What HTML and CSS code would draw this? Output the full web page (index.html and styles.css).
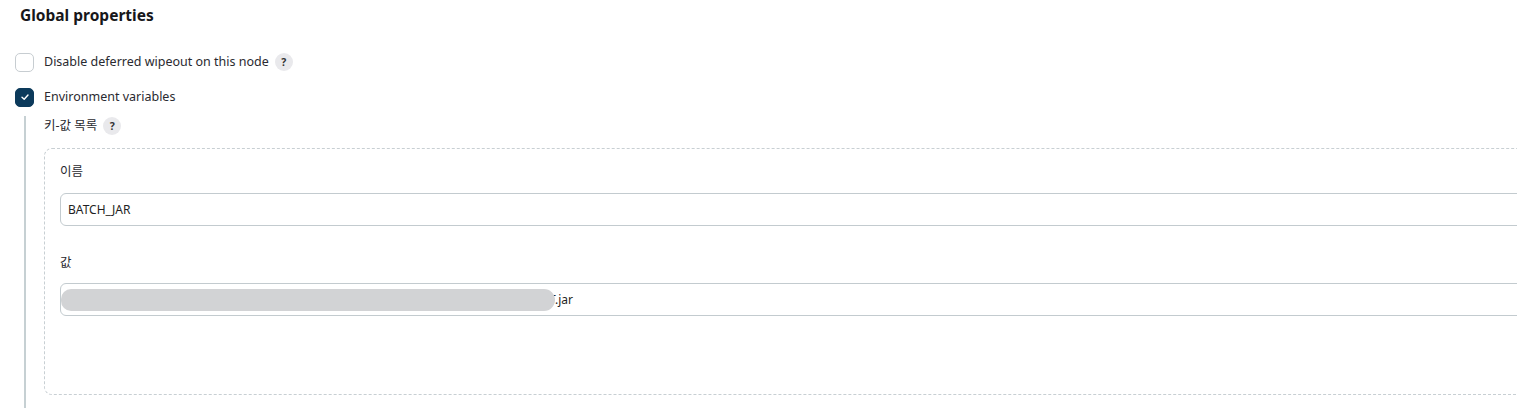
FILE: index.html
```html
<!DOCTYPE html>
<html>
<head>
<meta charset="utf-8">
<link rel="stylesheet" href="styles.css">
</head>
<body>
<div class="page">
  <h2 class="title">Global properties</h2>
  <div class="option">
    <span class="box"></span>
    <span class="label">Disable deferred wipeout on this node</span>
    <span class="help">?</span>
  </div>
  <div class="option checked-row">
    <span class="box checked">
      <svg width="10" height="10" viewBox="0 0 10 10"><path d="M2 5.2 L4.2 7.3 L8 3" fill="none" stroke="#fff" stroke-width="1.4" stroke-linecap="round" stroke-linejoin="round"/></svg>
    </span>
    <span class="label">Environment variables</span>
  </div>
  <div class="nested">
    <div class="kv-head">
      <span class="label">키-값 목록</span>
      <span class="help">?</span>
    </div>
    <div class="repeat">
      <div class="field-label">이름</div>
      <div class="input first">BATCH_JAR</div>
      <div class="field-label value-label">값</div>
      <div class="input redacted">
        <span class="blob"></span>
        <span class="tail">T.jar</span>
      </div>
    </div>
  </div>
</div>
</body>
</html>
```

FILE: styles.css
```css
html, body {
  margin: 0;
  padding: 0;
  background: #fff;
}
body {
  width: 1517px;
  height: 408px;
  overflow: hidden;
  font-family: "Noto Sans", "Noto Sans CJK KR", sans-serif;
  color: #1f1f23;
  font-size: 12.5px;
}
.page {
  padding: 0 0 0 15px;
  width: 1502px;
  height: 408px;
  overflow: hidden;
}
.title {
  margin: 0;
  padding: 4px 0 0 5px;
  height: 26px;
  font-size: 15.5px;
  font-weight: 700;
  line-height: 22px;
  color: #17171b;
}
.option {
  display: flex;
  align-items: center;
  height: 20px;
  margin-top: 22px;
}
.checked-row {
  margin-top: 15px;
}
.box {
  width: 17px;
  height: 17px;
  border: 1.5px solid #c7cdd1;
  border-radius: 5px;
  display: flex;
  align-items: center;
  justify-content: center;
  box-sizing: content-box;
  margin-right: 10px;
}
.box.checked {
  background: #0c3a5b;
  border-color: #0c3a5b;
}
.label {
  line-height: 20px;
  color: #2a2a30;
}
.help {
  width: 18px;
  height: 18px;
  border-radius: 50%;
  background: #e9e9ec;
  color: #333;
  font-size: 10.5px;
  font-weight: 700;
  display: inline-flex;
  align-items: center;
  justify-content: center;
  margin-left: 6px;
}
.nested {
  margin-left: 9px;
  margin-top: 9px;
  border-left: 2px solid #c6d0d3;
  padding-left: 18px;
  padding-bottom: 20px;
}
.kv-head {
  display: flex;
  align-items: center;
  height: 20px;
}
.repeat {
  margin-top: 12px;
  border: 1px dashed #c8cfd3;
  border-radius: 8px;
  padding: 13px 0 78px 15px;
  width: 1520px;
}
.field-label {
  line-height: 20px;
  height: 20px;
  color: #2a2a30;
}
.value-label {
  margin-top: 27px;
}
.input {
  margin-top: 10px;
  height: 31px;
  border: 1px solid #c3cbcf;
  border-radius: 6px;
  box-sizing: content-box;
  display: flex;
  align-items: center;
  padding-left: 7px;
  font-size: 12px;
  color: #1f1f23;
  position: relative;
}
.input.first {
  margin-top: 11px;
}
.tail {
  padding-left: 481px;
}
.blob {
  position: absolute;
  left: 0;
  top: 5px;
  width: 494px;
  height: 22px;
  background: #d2d3d5;
  border-radius: 11px 12px 12px 11px;
}
```
